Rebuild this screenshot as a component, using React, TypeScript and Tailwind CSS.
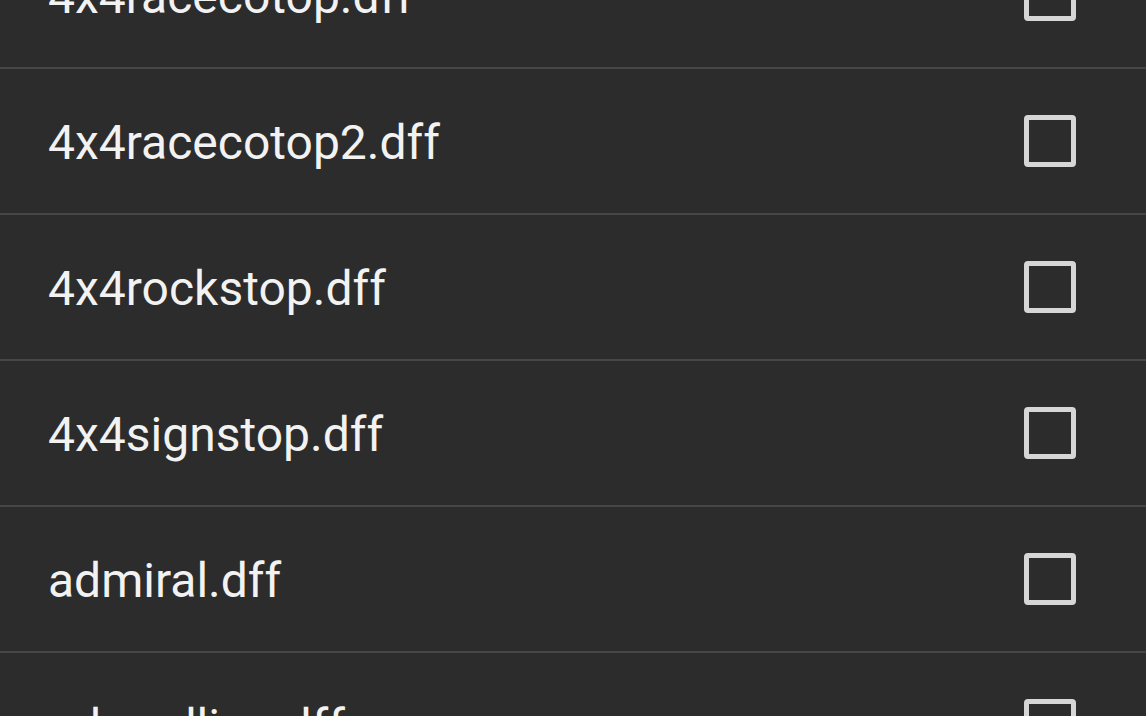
import React from 'react';

const files = [
  '4x4racecotop.dff',
  '4x4racecotop2.dff',
  '4x4rockstop.dff',
  '4x4signstop.dff',
  'admiral.dff',
  'admadline.dff',
];

export default function App() {
  return (
    <div className="h-[716px] w-[1146px] overflow-hidden bg-[#2c2c2c] font-['Roboto',sans-serif]">
      <div className="-mt-[77px]">
        {files.map((name) => (
          <div
            key={name}
            className="flex h-[146px] items-center justify-between border-b-2 border-[#464646] pl-[48px] pr-[70px]"
          >
            <span className="mt-[3px] text-[48px] leading-none text-[#f2f2f2]">{name}</span>
            <div className="h-[52px] w-[52px] rounded-[4px] border-[5px] border-[#d6d6d6]" />
          </div>
        ))}
      </div>
    </div>
  );
}
